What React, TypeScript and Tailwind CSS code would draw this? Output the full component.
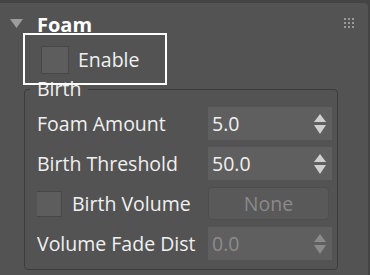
import type { ReactNode } from 'react'

function Spinner({ value, disabled }: { value: string; disabled?: boolean }) {
  const arrow = disabled ? '#8a8a8a' : '#d0d0d0'
  return (
    <div className="w-[124px] h-[33px] bg-[#5f5f5f] flex items-center justify-between pl-[4px] pr-[6px]">
      <span className={disabled ? 'text-[#8c8c8c]' : 'text-[#f0f0f0]'}>{value}</span>
      <svg width="12" height="20" viewBox="0 0 12 20">
        <polygon points="6,0 12,8 0,8" fill={arrow} />
        <polygon points="0,11 12,11 6,20" fill={arrow} />
      </svg>
    </div>
  )
}

function Row({ label, children }: { label: ReactNode; children: ReactNode }) {
  return (
    <div className="h-[33px] flex items-center">
      <div className="w-[165px] mr-[6px] whitespace-nowrap overflow-hidden">{label}</div>
      {children}
    </div>
  )
}

function Checkbox({ size }: { size: number }) {
  return (
    <div
      className={
        size === 28
          ? 'w-[28px] h-[28px] shrink-0 bg-[#5d5d5d] border border-[#474747]'
          : 'w-[26px] h-[26px] shrink-0 bg-[#5d5d5d] border border-[#474747]'
      }
    />
  )
}

export default function App() {
  return (
    <div className="w-[370px] h-[275px] bg-[#444444] pt-[3px] pr-[2px] overflow-hidden font-['Open_Sans',sans-serif] text-[19.5px] text-[#f0f0f0]">
      <div className="bg-[#535353] rounded-tr-[4px] h-[272px]">
        {/* rollout header */}
        <div className="h-[40px] flex items-center pt-[3px] pl-[10px] pr-[14px]">
          <svg width="13" height="9" viewBox="0 0 13 9" className="shrink-0 -mt-[3px]">
            <polygon points="0,0 13,0 6.5,9" fill="#9c9c9c" />
          </svg>
          <span className="ml-[14px] font-bold text-[20px] text-white">Foam</span>
          <div className="ml-auto -mt-[3px] grid grid-cols-3 gap-[2px] w-[10px]">
            {Array.from({ length: 9 }).map((_, i) => (
              <div key={i} className="w-[2px] h-[2px] bg-[#9a9a9a]" />
            ))}
          </div>
        </div>

        {/* enable row with focus rectangle */}
        <div className="relative h-[34px] flex items-center pl-[41px] gap-[9px]">
          <Checkbox size={28} />
          <span>Enable</span>
          <div className="absolute left-[23px] top-[-10px] w-[144px] h-[52px] border-2 border-white z-10 pointer-events-none" />
        </div>

        {/* birth group */}
        <fieldset className="ml-[24px] w-[314px] border border-[#3c3c3c] rounded-[4px] pl-[12px] pr-[5px] pt-[6px] pb-[9px] flex flex-col gap-[7px]">
          <legend className="-ml-[7px] px-[7px] leading-[24px]">Birth</legend>
          <Row label="Foam Amount">
            <Spinner value="5.0" />
          </Row>
          <Row label="Birth Threshold">
            <Spinner value="50.0" />
          </Row>
          <Row
            label={
              <div className="flex items-center gap-[10px] -ml-[1px]">
                <Checkbox size={26} />
                <span>Birth Volume</span>
              </div>
            }
          >
            <div className="w-[121px] h-[33px] rounded-[4px] bg-[#595959] border border-[#4e4e4e] flex items-center justify-center text-[#8a8a8a]">
              None
            </div>
          </Row>
          <Row label="Volume Fade Dist">
            <Spinner value="0.0" disabled />
          </Row>
        </fieldset>
      </div>
    </div>
  )
}
